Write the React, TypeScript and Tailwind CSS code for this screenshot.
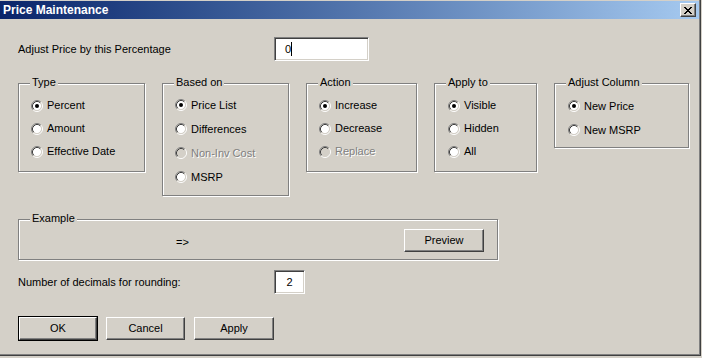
import React from "react";

function Radio({ checked = false, disabled = false }: { checked?: boolean; disabled?: boolean }) {
  return (
    <svg width="12" height="12" viewBox="0 0 12 12" className="shrink-0">
      <circle cx="6" cy="6" r="4.2" fill={disabled ? "#d4d0c8" : "#ffffff"} />
      <path d="M 2.11 9.89 A 5.5 5.5 0 0 1 9.89 2.11" fill="none" stroke="#808080" strokeWidth="1" />
      <path d="M 9.89 2.11 A 5.5 5.5 0 0 1 2.11 9.89" fill="none" stroke="#ffffff" strokeWidth="1" />
      <path d="M 2.82 9.18 A 4.5 4.5 0 0 1 9.18 2.82" fill="none" stroke="#404040" strokeWidth="1" />
      <path d="M 9.18 2.82 A 4.5 4.5 0 0 1 2.82 9.18" fill="none" stroke="#d4d0c8" strokeWidth="1" />
      {checked && <circle cx="6" cy="6" r="2" fill={disabled ? "#808080" : "#000000"} />}
    </svg>
  );
}

function Option({
  label,
  checked = false,
  disabled = false,
  h,
}: {
  label: string;
  checked?: boolean;
  disabled?: boolean;
  h: "h-[23px]" | "h-[24px]";
}) {
  return (
    <div className={`flex items-center gap-[4px] ${h}`}>
      <Radio checked={checked} disabled={disabled} />
      <span className={disabled ? "text-[#808080] [text-shadow:1px_1px_0_#ffffff]" : "text-black"}>{label}</span>
    </div>
  );
}

function Group({
  title,
  className,
  children,
}: {
  title: string;
  className: string;
  children?: React.ReactNode;
}) {
  return (
    <div
      className={`relative shrink-0 border border-[#808080] shadow-[inset_1px_1px_0_#ffffff,1px_1px_0_#ffffff] ${className}`}
    >
      <span className="absolute left-[11px] top-[-8px] bg-[#d4d0c8] px-[2px] leading-[13px]">{title}</span>
      {children}
    </div>
  );
}

function Button({ label, isDefault = false, w }: { label: string; isDefault?: boolean; w: string }) {
  if (isDefault) {
    return (
      <div className={`border border-black shrink-0 ${w} h-[25px]`}>
        <div className="w-full h-full flex items-center justify-center border-t border-l border-t-white border-l-white border-b border-r border-b-[#404040] border-r-[#404040] shadow-[inset_-1px_-1px_0_#808080]">
          {label}
        </div>
      </div>
    );
  }
  return (
    <div
      className={`shrink-0 ${w} h-[23px] flex items-center justify-center border-t border-l border-t-white border-l-white border-b border-r border-b-[#404040] border-r-[#404040] shadow-[inset_-1px_-1px_0_#808080]`}
    >
      {label}
    </div>
  );
}

function TextBox({ className, children }: { className: string; children?: React.ReactNode }) {
  return (
    <div
      className={`bg-white border-t border-l border-t-[#808080] border-l-[#808080] border-b border-r border-b-white border-r-white shadow-[inset_1px_1px_0_#404040,inset_-1px_-1px_0_#d4d0c8] flex items-center ${className}`}
    >
      {children}
    </div>
  );
}

export default function App() {
  return (
    <div className="w-[702px] h-[358px] bg-[#d4d0c8] font-['Liberation_Sans',Arial,sans-serif] text-[11px] leading-[13px] text-black overflow-hidden">
      <div className="w-[701px] h-[356px] flex flex-col border-r border-b border-r-[#404040] border-b-[#404040] shadow-[inset_-1px_-1px_0_#808080]">
        {/* title bar */}
        <div className="mt-[1px] mr-[1px] h-[18px] flex items-center bg-gradient-to-r from-[#0a246a] to-[#a6caf0] pl-[3px] pr-[3px]">
          <span className="text-white font-bold text-[12px] leading-[14px]">Price Maintenance</span>
          <div className="ml-auto w-[16px] h-[14px] bg-[#d4d0c8] border-t border-l border-t-white border-l-white border-b border-r border-b-[#404040] border-r-[#404040] shadow-[inset_-1px_-1px_0_#808080] flex items-center justify-center">
            <svg width="8" height="7" viewBox="0 0 8 7" shapeRendering="crispEdges">
              <path
                d="M0 0h2v1h-2zM6 0h2v1h-2zM1 1h2v1h-2zM5 1h2v1h-2zM2 2h4v1h-4zM3 3h2v1h-2zM2 4h4v1h-4zM1 5h2v1h-2zM5 5h2v1h-2zM0 6h2v1h-2zM6 6h2v1h-2z"
                fill="#000"
              />
            </svg>
          </div>
        </div>

        <div className="flex flex-col pl-[18px]">
          {/* percentage row */}
          <div className="mt-[18px] flex items-center h-[24px]">
            <span className="w-[256px]">Adjust Price by this Percentage</span>
            <TextBox className="w-[95px] h-[24px] pl-[10px]">
              <span>0</span>
              <span className="w-[1px] h-[14px] bg-black" />
            </TextBox>
          </div>

          {/* groups */}
          <div className="mt-[22px] flex items-start gap-[17px]">
            <Group title="Type" className="w-[127px] h-[89px] pl-[12px] pt-[10px]">
              <Option label="Percent" checked h="h-[23px]" />
              <Option label="Amount" h="h-[23px]" />
              <Option label="Effective Date" h="h-[23px]" />
            </Group>
            <Group title="Based on" className="w-[127px] h-[113px] pl-[12px] pt-[9px]">
              <Option label="Price List" checked h="h-[24px]" />
              <Option label="Differences" h="h-[24px]" />
              <Option label="Non-Inv Cost" disabled h="h-[24px]" />
              <Option label="MSRP" h="h-[24px]" />
            </Group>
            <Group title="Action" className="w-[111px] h-[89px] pl-[12px] pt-[10px]">
              <Option label="Increase" checked h="h-[23px]" />
              <Option label="Decrease" h="h-[23px]" />
              <Option label="Replace" disabled h="h-[23px]" />
            </Group>
            <Group title="Apply to" className="w-[103px] h-[89px] pl-[13px] pt-[10px]">
              <Option label="Visible" checked h="h-[23px]" />
              <Option label="Hidden" h="h-[23px]" />
              <Option label="All" h="h-[23px]" />
            </Group>
            <Group title="Adjust Column" className="w-[135px] h-[65px] pl-[13px] pt-[10px]">
              <Option label="New Price" checked h="h-[24px]" />
              <Option label="New MSRP" h="h-[24px]" />
            </Group>
          </div>

          {/* example */}
          <div className="mt-[23px]">
            <Group title="Example" className="w-[480px] h-[41px] flex items-start pt-[9px]">
              <span className="ml-[157px] mt-[7px] w-[228px]">=&gt;</span>
              <Button label="Preview" w="w-[80px]" />
            </Group>
          </div>

          {/* decimals row */}
          <div className="mt-[10px] flex items-center h-[24px]">
            <span className="w-[256px]">Number of decimals for rounding:</span>
            <TextBox className="w-[31px] h-[24px] justify-center">
              <span>2</span>
            </TextBox>
          </div>

          {/* buttons */}
          <div className="mt-[22px] flex items-start">
            <Button label="OK" isDefault w="w-[80px]" />
            <div className="mt-[1px] ml-[8px]">
              <Button label="Cancel" w="w-[79px]" />
            </div>
            <div className="mt-[1px] ml-[9px]">
              <Button label="Apply" w="w-[80px]" />
            </div>
          </div>
        </div>
      </div>
    </div>
  );
}
